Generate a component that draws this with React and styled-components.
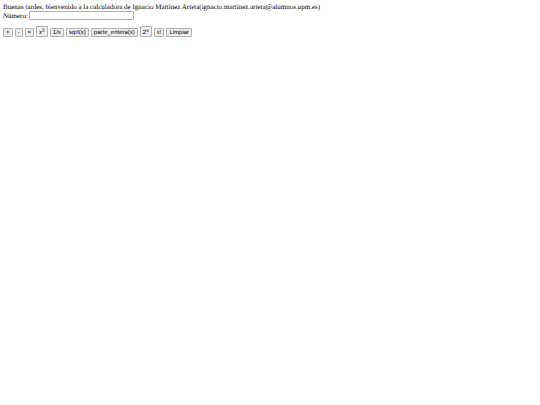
import React from "react";
import styled, { createGlobalStyle } from "styled-components";

const GlobalStyle = createGlobalStyle`
  body {
    margin: 0;
    background: #fff;
    color: #000;
    font-family: "Liberation Serif", "Times New Roman", serif;
    font-size: 7px;
    line-height: 8px;
    text-rendering: geometricPrecision;
  }
`;

const Page = styled.main`
  padding: 3px;
`;

const Greeting = styled.p`
  margin: 0;
`;

const Field = styled.label`
  display: flex;
  align-items: center;
  gap: 1px;
`;

const NumberInput = styled.input`
  box-sizing: border-box;
  width: 105px;
  height: 9px;
  padding: 0 1px;
  border: 1px solid #b0b0b0;
  border-radius: 1px;
  background: #fff;
  font: 6px/7px "Liberation Sans", Arial, sans-serif;
`;

const Keys = styled.div`
  display: flex;
  flex-wrap: wrap;
  align-items: flex-end;
  gap: 2px;
  margin-top: 6px;
`;

const Key = styled.button`
  box-sizing: border-box;
  padding: ${(p) => (p.$tall ? "3px 2px 0" : "1px 2px 0")};
  border: 1px solid #b0b0b0;
  border-radius: 1px;
  background: #efefef;
  color: #000;
  font: 6px/6px "Liberation Sans", Arial, sans-serif;
  text-rendering: inherit;
`;

const Power = styled.sup`
  font-size: 5px;
  line-height: 0;
  vertical-align: 2px;
`;

const keys = [
  { label: "+" },
  { label: "-" },
  { label: "=" },
  { label: "x", power: "2" },
  { label: "1/x" },
  { label: "sqrt(x)" },
  { label: "parte_entera(x)" },
  { label: "2", power: "x" },
  { label: "x!" },
  { label: "Limpiar" },
];

export default function App() {
  return (
    <Page>
      <GlobalStyle />
      <Greeting>
        Buenas tardes, bienvenido a la calculadora de Ignacio Martínez
        Arteta(ignacio.martinez.arteta@alumnos.upm.es)
      </Greeting>
      <Field>
        Número: <NumberInput type="text" />
      </Field>
      <Keys>
        {keys.map(({ label, power }) => (
          <Key key={label + (power || "")} type="button" $tall={Boolean(power)}>
            {label}
            {power && <Power>{power}</Power>}
          </Key>
        ))}
      </Keys>
    </Page>
  );
}
